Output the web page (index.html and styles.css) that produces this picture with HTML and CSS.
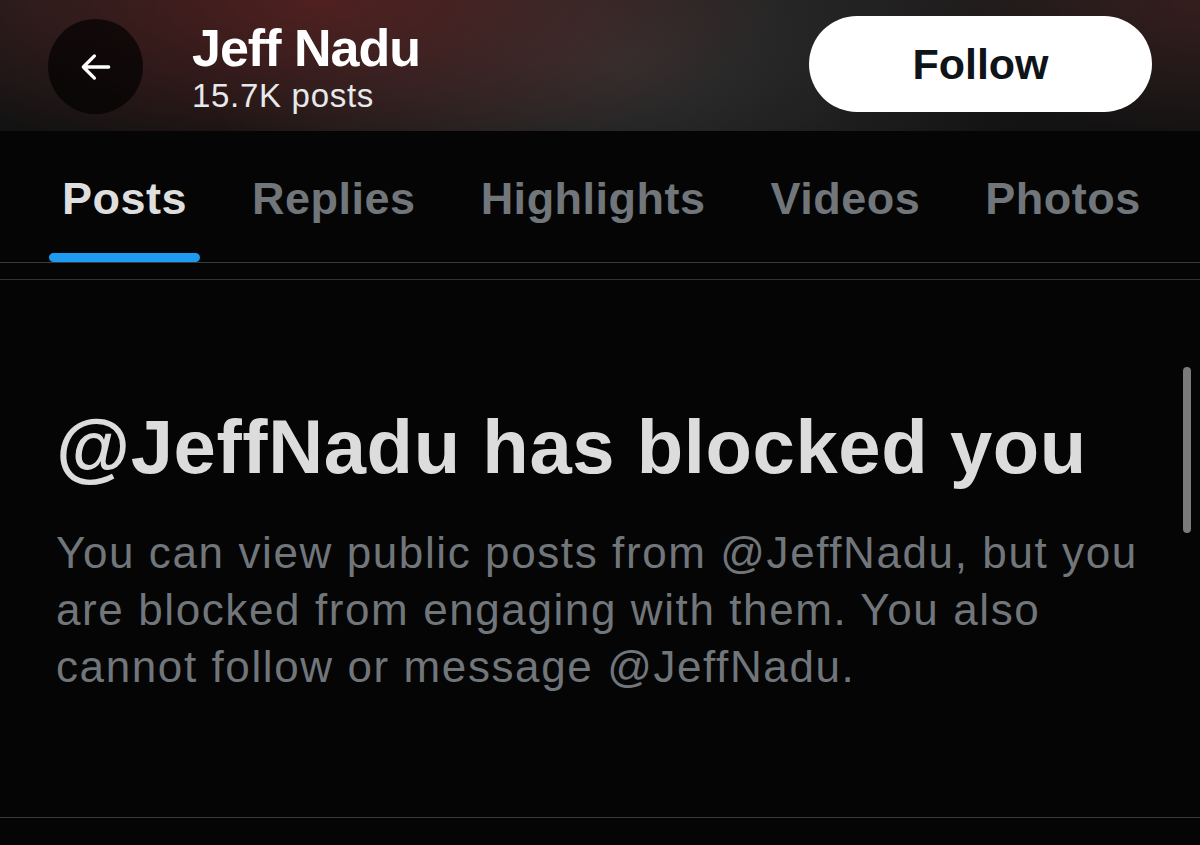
FILE: index.html
```html
<!DOCTYPE html>
<html lang="en">
<head>
  <meta charset="UTF-8" />
  <meta name="viewport" content="width=device-width, initial-scale=1.0"/>
  <title>Jeff Nadu</title>
  <link rel="stylesheet" href="styles.css">
</head>
<body>
  <header class="top-bar">
    <button class="back-btn" aria-label="Back">
      <svg viewBox="0 0 24 24" width="38" height="38">
        <path d="M20 12H5M11 5l-7 7 7 7" fill="none" stroke="#fff" stroke-width="2.1" stroke-linecap="round" stroke-linejoin="round"/>
      </svg>
    </button>
    <div class="title">
      <div class="name">Jeff Nadu</div>
      <div class="count">15.7K posts</div>
    </div>
    <button class="follow-btn">Follow</button>
  </header>

  <nav class="tabs">
    <a class="tab active">Posts</a>
    <a class="tab">Replies</a>
    <a class="tab">Highlights</a>
    <a class="tab">Videos</a>
    <a class="tab">Photos</a>
  </nav>

  <section class="blocked">
    <h2>@JeffNadu has blocked you</h2>
    <p>You can view public posts from @JeffNadu, but you are blocked from engaging with them. You also cannot follow or message @JeffNadu.</p>
  </section>

  <div class="scroll-thumb"></div>
</body>
</html>
```

FILE: styles.css
```css
body {
  margin: 0;
  background-color: #050505;
  font-family: "Liberation Sans", Arial, sans-serif;
  color: #e7e9ea;
  height: 845px;
  overflow: hidden;
}

.top-bar {
  height: 131px;
  display: flex;
  align-items: center;
  padding: 0 48px;
  box-sizing: border-box;
  background:
    radial-gradient(ellipse 460px 170px at 320px 0, rgba(95, 32, 32, 0.75), rgba(95, 32, 32, 0) 100%),
    radial-gradient(ellipse 260px 140px at 1200px 0, rgba(70, 32, 32, 0.6), rgba(70, 32, 32, 0) 100%),
    radial-gradient(ellipse 420px 220px at 620px 60px, rgba(50, 50, 50, 0.9), rgba(50, 50, 50, 0) 100%),
    linear-gradient(to bottom, #1c1a1a, #121212);
}

.back-btn {
  width: 95px;
  height: 95px;
  border-radius: 50%;
  border: none;
  background-color: rgba(0, 0, 0, 0.66);
  display: flex;
  align-items: center;
  justify-content: center;
  padding: 0;
  margin-top: 2px;
}

.title {
  margin-left: 49px;
  flex: 1;
  align-self: flex-start;
  padding-top: 22px;
  display: flex;
  flex-direction: column;
}

.name {
  font-size: 52px;
  font-weight: 700;
  letter-spacing: -1px;
  line-height: 52px;
  color: #fff;
}

.count {
  margin-top: 3px;
  font-size: 33px;
  line-height: 37px;
  letter-spacing: 0.7px;
  color: #e7e9ea;
}

.follow-btn {
  width: 343px;
  height: 96px;
  border-radius: 48px;
  border: none;
  background-color: #fff;
  color: #0f1419;
  font-family: "Liberation Sans", Arial, sans-serif;
  font-size: 43px;
  font-weight: 700;
  margin-top: -3px;
}

.tabs {
  display: flex;
  gap: 39px;
  padding: 0 0 0 49px;
  border-bottom: 1px solid #3a3a3c;
  height: 132px;
  box-sizing: border-box;
}

.tab {
  position: relative;
  padding: 42px 13px 0;
  font-size: 45px;
  font-weight: 700;
  letter-spacing: 0.5px;
  color: #71767b;
}

.tab.active {
  color: #dedede;
}

.tab.active::after {
  content: "";
  position: absolute;
  left: 0;
  right: 0;
  bottom: 0;
  height: 9px;
  border-radius: 5px;
  background-color: #1d9bf0;
}

.blocked {
  margin-top: 16px;
  border-top: 1px solid #2f3336;
  border-bottom: 1px solid #3a3a3c;
  padding: 0 56px;
  height: 539px;
  box-sizing: border-box;
}

.blocked h2 {
  margin: 122px 0 0;
  font-size: 76px;
  font-weight: 700;
  letter-spacing: 0.6px;
  line-height: 90px;
  color: #dcdcdc;
}

.blocked p {
  margin: 32px 0 0;
  font-size: 44px;
  line-height: 57px;
  letter-spacing: 1.6px;
  color: #71767b;
}

.scroll-thumb {
  position: absolute;
  left: 1183px;
  top: 367px;
  width: 8px;
  height: 166px;
  border-radius: 4px;
  background-color: #7a7a7a;
}
```
